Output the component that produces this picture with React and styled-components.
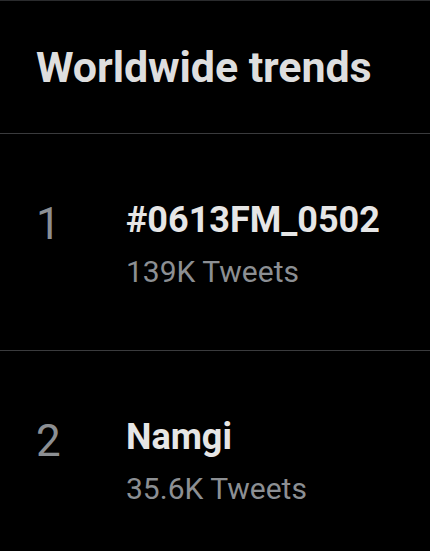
import React from 'react'
import styled, { createGlobalStyle } from 'styled-components'

const GlobalStyle = createGlobalStyle`
  html, body {
    margin: 0;
    padding: 0;
    background: #000;
  }
  body {
    font-family: Roboto, "Liberation Sans", Arial, sans-serif;
    -webkit-font-smoothing: antialiased;
  }
`

const Page = styled.div`
  width: 430px;
  min-height: 551px;
  background: #000;
  border-top: 1px solid #2a2b2d;
`

const Header = styled.div`
  padding: 45px 0 44px 36px;
  border-bottom: 1px solid #3a3b3d;
`

const Title = styled.h1`
  margin: 0;
  font-size: 43px;
  line-height: 43px;
  font-weight: 700;
  color: #dedede;
  letter-spacing: -0.1px;
`

const Row = styled.div`
  display: flex;
  align-items: flex-start;
  padding: 68px 0 63px 36px;
  border-bottom: ${p => (p.$last ? 'none' : '1px solid #3a3b3d')};
`

const Rank = styled.div`
  width: 90px;
  flex: none;
  font-size: 44px;
  line-height: 44px;
  font-weight: 400;
  color: #8c8f93;
`

const Info = styled.div`
  display: flex;
  flex-direction: column;
  gap: 19px;
`

const Name = styled.div`
  font-size: 36px;
  line-height: 36px;
  font-weight: 700;
  color: #e6e6e6;
`

const Count = styled.div`
  font-size: 30px;
  line-height: 30px;
  font-weight: 400;
  color: #8c8f93;
`

const trends = [
  { rank: 1, name: '#0613FM_0502', count: '139K Tweets' },
  { rank: 2, name: 'Namgi', count: '35.6K Tweets' },
]

export default function App() {
  return (
    <Page>
      <GlobalStyle />
      <Header>
        <Title>Worldwide trends</Title>
      </Header>
      {trends.map((t, i) => (
        <Row key={t.rank} $last={i === trends.length - 1}>
          <Rank>{t.rank}</Rank>
          <Info>
            <Name>{t.name}</Name>
            <Count>{t.count}</Count>
          </Info>
        </Row>
      ))}
    </Page>
  )
}
